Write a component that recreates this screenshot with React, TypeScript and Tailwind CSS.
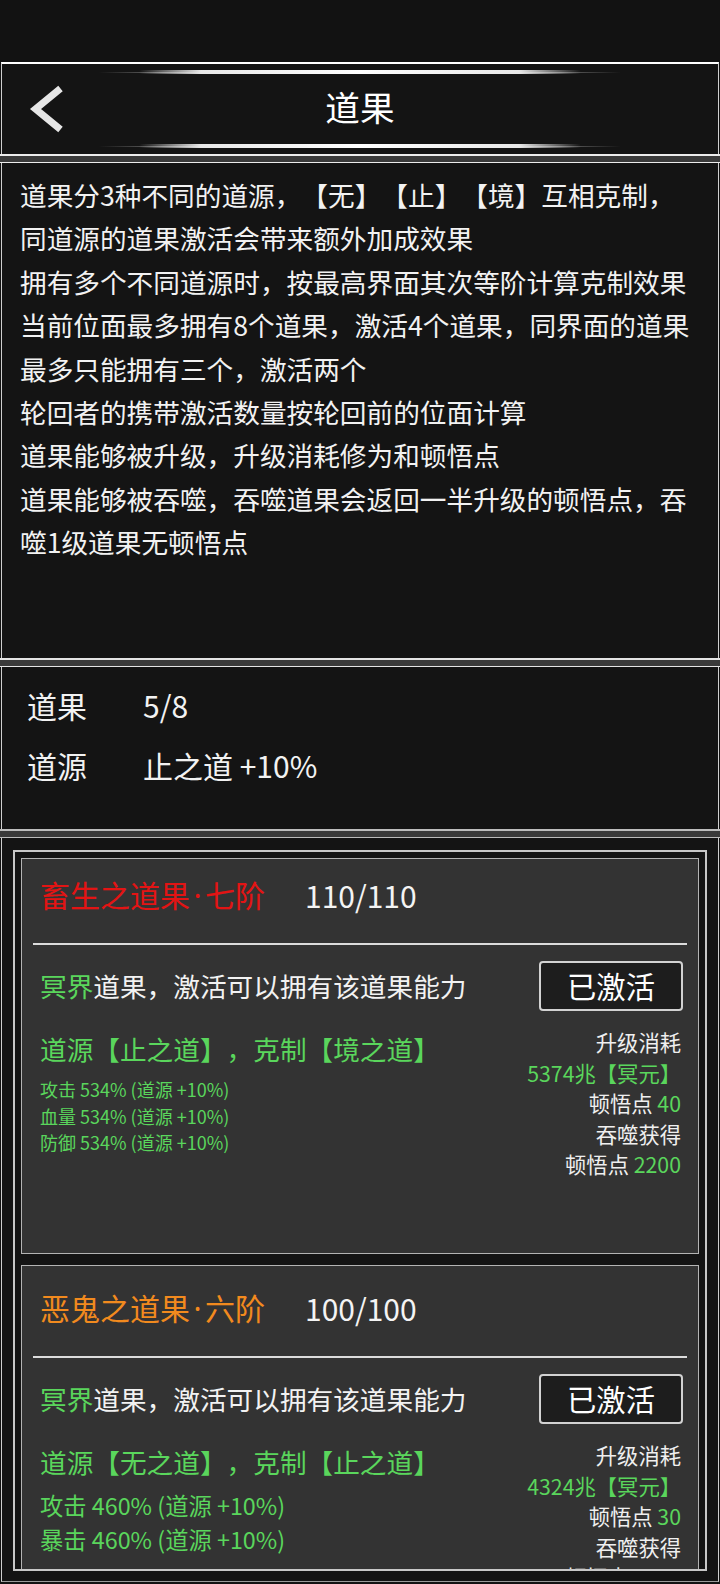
import React from 'react';

type Fruit = {
  name: [string, string];
  nameColor: string;
  level: string;
  source: string;
  stats: string[];
  statClass: string;
  titleClass: string;
  cost: string;
  insight: string;
  devour: string;
};

const FRUITS: Fruit[] = [
  {
    name: ['畜生之道果', '七阶'],
    nameColor: 'text-[#e31414]',
    level: '110/110',
    source: '道源【止之道】，克制【境之道】',
    stats: ['攻击 534% (道源 +10%)', '血量 534% (道源 +10%)', '防御 534% (道源 +10%)'],
    statClass: 'text-[18px] leading-[26.5px]',
    titleClass: 'h-[72px] mb-[12px]',
    cost: '5374兆【冥元】',
    insight: '40',
    devour: '2200',
  },
  {
    name: ['恶鬼之道果', '六阶'],
    nameColor: 'text-[#f28a1e]',
    level: '100/100',
    source: '道源【无之道】，克制【止之道】',
    stats: ['攻击 460% (道源 +10%)', '暴击 460% (道源 +10%)'],
    statClass: 'text-[23.3px] leading-[33.5px]',
    titleClass: 'h-[84px] mb-[6px]',
    cost: '4324兆【冥元】',
    insight: '30',
    devour: '1800',
  },
];

const RULES = [
  '道果分3种不同的道源，【无】【止】【境】互相克制，',
  '同道源的道果激活会带来额外加成效果',
  '拥有多个不同道源时，按最高界面其次等阶计算克制效果',
  '当前位面最多拥有8个道果，激活4个道果，同界面的道果',
  '最多只能拥有三个，激活两个',
  '轮回者的携带激活数量按轮回前的位面计算',
  '道果能够被升级，升级消耗修为和顿悟点',
  '道果能够被吞噬，吞噬道果会返回一半升级的顿悟点，吞',
  '噬1级道果无顿悟点',
];

const Band = ({ line }: { line: string }) => (
  <div className={`h-[9px] shrink-0 border-t-2 border-b bg-[#3a3a3a] ${line}`} />
);

const GlowLine = () => (
  <div className="relative mx-auto h-[4px] w-[522px]">
    <div className="absolute inset-x-0 top-[1.5px] h-px bg-[linear-gradient(90deg,transparent,#6c6c6c_12%,#8c8c8c_50%,#6c6c6c_88%,transparent)]" />
    <div className="absolute inset-y-0 left-[40px] right-[40px] rounded-full bg-[linear-gradient(90deg,transparent,#e8e8e8_14%,#ffffff_50%,#e8e8e8_86%,transparent)]" />
  </div>
);

const FruitCard = ({ fruit }: { fruit: Fruit }) => (
  <div className="h-[396px] shrink-0 border border-[#b4b4b4] bg-[#333333]">
    <div className={`flex items-center pl-[18px] text-[30px] ${fruit.titleClass}`}>
      <span className={`w-[265px] shrink-0 whitespace-nowrap ${fruit.nameColor}`}>
        {fruit.name[0]}
        <span className="px-[3.5px] font-['Noto_Sans',sans-serif]">·</span>
        {fruit.name[1]}
      </span>
      <span className="text-[#f4f4f4]">{fruit.level}</span>
    </div>
    <div className="mx-[11px] h-[2px] bg-[#dcdcdc]" />

    <div className="mt-[16px] flex h-[50px] items-center justify-between pl-[18px] pr-[15px]">
      <p className="text-[26.67px] text-[#f2f2f2]">
        <span className="text-[#5ad65c]">冥界</span>道果，激活可以拥有该道果能力
      </p>
      <button className="flex h-[50px] w-[144px] items-center justify-center rounded-[4px] border-2 border-[#d2d2d2] bg-[#1d1d1d] text-[29.3px] text-white">
        已激活
      </button>
    </div>

    <div className="flex justify-between pl-[18px] pr-[17px]">
      <div className="pt-[20px] text-[#5ad65c]">
        <p className="whitespace-nowrap text-[26.67px] leading-[36px]">{fruit.source}</p>
        <div className={`mt-[9px] ${fruit.statClass}`}>
          {fruit.stats.map((s) => (
            <p key={s} className="whitespace-nowrap">{s}</p>
          ))}
        </div>
      </div>
      <div className="flex flex-col items-end pt-[16px] text-[21.3px] leading-[30.5px] text-[#efefef]">
        <p>升级消耗</p>
        <p className="text-[#5ad65c]">{fruit.cost}</p>
        <p>
          顿悟点 <span className="text-[#5ad65c]">{fruit.insight}</span>
        </p>
        <p>吞噬获得</p>
        <p>
          顿悟点 <span className="text-[#5ad65c]">{fruit.devour}</span>
        </p>
      </div>
    </div>
  </div>
);

export default function App() {
  return (
    <div className="flex h-[1584px] w-[720px] flex-col overflow-hidden bg-[#121212] font-['Noto_Sans_CJK_SC',sans-serif] text-white [text-spacing-trim:space-all]">
      <div className="h-[62px] shrink-0" />

      <header className="mx-px flex h-[92px] shrink-0 flex-col border-x border-t-2 border-x-[#cfcfcf] border-t-white bg-[#141414] pt-[6px]">
        <GlowLine />
        <div className="grid h-[70px] grid-cols-[1fr_auto_1fr] items-center">
          <div className="pl-[26px]">
            <svg width="36" height="50" viewBox="0 0 36 50" fill="none">
              <polyline
                points="32.5,4.5 7.5,25 32.5,45.5"
                stroke="#e6e6e6"
                strokeWidth="7"
                strokeLinecap="butt"
                strokeLinejoin="miter"
              />
            </svg>
          </div>
          <h1 className="pb-[6px] text-[34.67px] leading-none text-white">道果</h1>
          <div />
        </div>
        <GlowLine />
      </header>

      <Band line="border-[#ececec]" />

      <section className="mx-px h-[495px] shrink-0 border-x border-x-[#cfcfcf] bg-[#141414] pl-[18px] pt-[10px] text-[26.67px] leading-[43.4px] text-[#f2f2f2]">
        {RULES.map((line) => (
          <p key={line} className="whitespace-nowrap">{line}</p>
        ))}
      </section>

      <Band line="border-[#e4e4e4]" />

      <section className="mx-px h-[162px] shrink-0 border-x border-x-[#cfcfcf] bg-[#141414] pl-[25px] pt-[8px] text-[30px] leading-[60px] text-[#f2f2f2]">
        <div className="flex">
          <span className="w-[116px]">道果</span>
          <span>5/8</span>
        </div>
        <div className="flex">
          <span className="w-[116px]">道源</span>
          <span>止之道 +10%</span>
        </div>
      </section>

      <Band line="border-[#bdbdbd]" />

      <section className="mx-px h-[744px] shrink-0 border-x border-b border-x-[#cfcfcf] border-b-[#9a9a9a] bg-[#141414] px-[11px] pt-[12px]">
        <div className="flex h-[721px] flex-col gap-[11px] overflow-hidden border-2 border-[#c8c8c8] p-[6px]">
          {FRUITS.map((f) => (
            <FruitCard key={f.name[0]} fruit={f} />
          ))}
        </div>
      </section>
    </div>
  );
}
